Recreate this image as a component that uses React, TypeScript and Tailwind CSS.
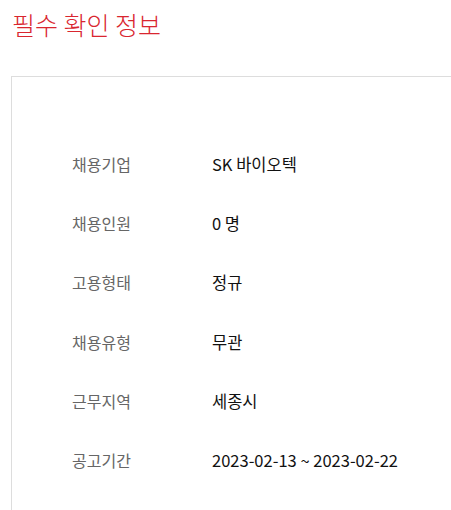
import React from "react";

const rows: [string, string][] = [
  ["채용기업", "SK 바이오텍"],
  ["채용인원", "0 명"],
  ["고용형태", "정규"],
  ["채용유형", "무관"],
  ["근무지역", "세종시"],
  ["공고기간", "2023-02-13 ~ 2023-02-22"],
];

export default function App() {
  return (
    <div
      className="w-[451px] h-[510px] overflow-hidden bg-white"
      style={{ fontFamily: '"Noto Sans CJK KR", "Noto Sans", sans-serif' }}
    >
      <h2 className="pl-[12px] pt-[6px] text-[25px] leading-[36px] text-[#d9262f] font-light">
        필수 확인 정보
      </h2>
      <div className="ml-[11px] mt-[34px] w-[600px] h-[600px] border border-[#dddddd] pt-[58px] pl-[60px]">
        {rows.map(([k, v]) => (
          <div key={k} className="flex py-5 text-[16px] leading-[19.2px]">
            <div className="w-[140px] text-[#666666]">{k}</div>
            <div className="text-[16.5px] text-[#111111]">{v}</div>
          </div>
        ))}
      </div>
    </div>
  );
}
